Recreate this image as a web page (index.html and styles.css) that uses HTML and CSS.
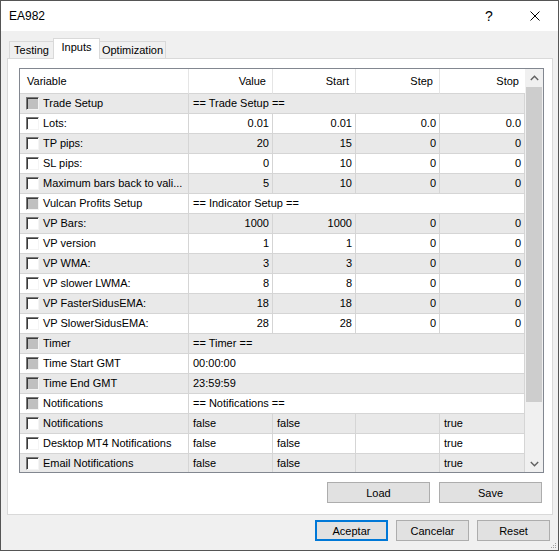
FILE: index.html
```html
<!DOCTYPE html>
<html>

<head>
  <meta charset="UTF-8">
  <title>EA982</title>
  <link rel="stylesheet" href="styles.css">
</head>

<body>
<div class="window">
  <div class="titlebar">
    <span class="title">EA982</span>
    <span class="caption-btn help">?</span>
    <span class="caption-btn close">
      <svg width="10" height="10" viewBox="0 0 10 10"><path d="M0.5 0.5 L9.5 9.5 M9.5 0.5 L0.5 9.5" stroke="#000" stroke-width="1" fill="none"/></svg>
    </span>
  </div>

  <div class="tabs">
    <div class="tab tab-testing">Testing</div>
    <div class="tab tab-inputs active">Inputs</div>
    <div class="tab tab-opt">Optimization</div>
  </div>

  <div class="panel">
    <div class="inputs">
      <div class="table">
        <div class="row head">
          <div class="cell">Variable</div>
          <div class="cell num">Value</div>
          <div class="cell num">Start</div>
          <div class="cell num">Step</div>
          <div class="cell num">Stop</div>
        </div>

        <div class="row">
          <div class="cell name"><i class="cb off"></i>Trade Setup</div>
          <div class="cell span">== Trade Setup ==</div>
        </div>
        <div class="row">
          <div class="cell name"><i class="cb"></i>Lots:</div>
          <div class="cell num">0.01</div><div class="cell num">0.01</div><div class="cell num">0.0</div><div class="cell num">0.0</div>
        </div>
        <div class="row">
          <div class="cell name"><i class="cb"></i>TP pips:</div>
          <div class="cell num">20</div><div class="cell num">15</div><div class="cell num">0</div><div class="cell num">0</div>
        </div>
        <div class="row">
          <div class="cell name"><i class="cb"></i>SL pips:</div>
          <div class="cell num">0</div><div class="cell num">10</div><div class="cell num">0</div><div class="cell num">0</div>
        </div>
        <div class="row">
          <div class="cell name"><i class="cb"></i>Maximum bars back to vali...</div>
          <div class="cell num">5</div><div class="cell num">10</div><div class="cell num">0</div><div class="cell num">0</div>
        </div>
        <div class="row">
          <div class="cell name"><i class="cb off"></i>Vulcan Profits Setup</div>
          <div class="cell span">== Indicator Setup ==</div>
        </div>
        <div class="row">
          <div class="cell name"><i class="cb"></i>VP Bars:</div>
          <div class="cell num">1000</div><div class="cell num">1000</div><div class="cell num">0</div><div class="cell num">0</div>
        </div>
        <div class="row">
          <div class="cell name"><i class="cb"></i>VP version</div>
          <div class="cell num">1</div><div class="cell num">1</div><div class="cell num">0</div><div class="cell num">0</div>
        </div>
        <div class="row">
          <div class="cell name"><i class="cb"></i>VP WMA:</div>
          <div class="cell num">3</div><div class="cell num">3</div><div class="cell num">0</div><div class="cell num">0</div>
        </div>
        <div class="row">
          <div class="cell name"><i class="cb"></i>VP slower LWMA:</div>
          <div class="cell num">8</div><div class="cell num">8</div><div class="cell num">0</div><div class="cell num">0</div>
        </div>
        <div class="row">
          <div class="cell name"><i class="cb"></i>VP FasterSidusEMA:</div>
          <div class="cell num">18</div><div class="cell num">18</div><div class="cell num">0</div><div class="cell num">0</div>
        </div>
        <div class="row">
          <div class="cell name"><i class="cb"></i>VP SlowerSidusEMA:</div>
          <div class="cell num">28</div><div class="cell num">28</div><div class="cell num">0</div><div class="cell num">0</div>
        </div>
        <div class="row">
          <div class="cell name"><i class="cb off"></i>Timer</div>
          <div class="cell span">== Timer ==</div>
        </div>
        <div class="row">
          <div class="cell name"><i class="cb off"></i>Time Start GMT</div>
          <div class="cell span">00:00:00</div>
        </div>
        <div class="row">
          <div class="cell name"><i class="cb off"></i>Time End GMT</div>
          <div class="cell span">23:59:59</div>
        </div>
        <div class="row">
          <div class="cell name"><i class="cb off"></i>Notifications</div>
          <div class="cell span">== Notifications ==</div>
        </div>
        <div class="row">
          <div class="cell name"><i class="cb"></i>Notifications</div>
          <div class="cell">false</div><div class="cell">false</div><div class="cell"></div><div class="cell">true</div>
        </div>
        <div class="row">
          <div class="cell name"><i class="cb"></i>Desktop MT4 Notifications</div>
          <div class="cell">false</div><div class="cell">false</div><div class="cell"></div><div class="cell">true</div>
        </div>
        <div class="row">
          <div class="cell name"><i class="cb"></i>Email Notifications</div>
          <div class="cell">false</div><div class="cell">false</div><div class="cell"></div><div class="cell">true</div>
        </div>
      </div>

      <div class="scrollbar">
        <div class="arrow">
          <svg width="9" height="6" viewBox="0 0 9 6"><path d="M0.8 5 L4.5 1.3 L8.2 5" stroke="#606060" stroke-width="1.4" fill="none"/></svg>
        </div>
        <div class="thumb"></div>
        <div class="track"></div>
        <div class="arrow">
          <svg width="9" height="6" viewBox="0 0 9 6"><path d="M0.8 1 L4.5 4.7 L8.2 1" stroke="#606060" stroke-width="1.4" fill="none"/></svg>
        </div>
      </div>
    </div>

    <div class="panel-buttons">
      <button class="btn wide">Load</button>
      <button class="btn wide">Save</button>
    </div>
  </div>

  <div class="dialog-buttons">
    <button class="btn default">Aceptar</button>
    <button class="btn">Cancelar</button>
    <button class="btn">Reset</button>
  </div>

  <svg class="grip" width="6" height="6" viewBox="0 0 6 6">
    <rect x="4" y="0" width="1" height="1" fill="#a0a0a0"/>
    <rect x="2" y="2" width="1" height="1" fill="#a0a0a0"/>
    <rect x="4" y="2" width="1" height="1" fill="#a0a0a0"/>
    <rect x="0" y="4" width="1" height="1" fill="#a0a0a0"/>
    <rect x="2" y="4" width="1" height="1" fill="#a0a0a0"/>
    <rect x="4" y="4" width="1" height="1" fill="#a0a0a0"/>
  </svg>
</div>
</body>

</html>
```

FILE: styles.css
```css
body {
  margin: 0;
  font-family: "Liberation Sans", Arial, sans-serif;
  font-size: 11px;
  color: #000;
}

.window {
  width: 559px;
  height: 551px;
  box-sizing: border-box;
  border: 1px solid #555;
  background: #f0f0f0;
  display: flex;
  flex-direction: column;
  position: relative;
}

/* title bar */
.titlebar {
  height: 30px;
  flex: none;
  background: #fff;
  display: flex;
  align-items: center;
  padding-left: 8px;
}
.title {
  flex: 1;
  font-size: 12px;
}
.caption-btn {
  width: 46px;
  height: 30px;
  display: flex;
  align-items: center;
  justify-content: center;
}
.help {
  font-size: 14px;
}

/* tabs */
.tabs {
  height: 27px;
  flex: none;
  display: flex;
  align-items: flex-end;
  padding-left: 8px;
}
.tab {
  height: 17px;
  box-sizing: border-box;
  border: 1px solid #d9d9d9;
  border-bottom: none;
  background: #f0f0f0;
  text-align: center;
  line-height: 16px;
}
.tab-testing {
  width: 45px;
}
.tab-inputs {
  width: 47px;
  margin-left: -1px;
}
.tab-opt {
  width: 67px;
  margin-left: -1px;
}
.tab.active {
  height: 21px;
  margin-bottom: -1px;
  background: #fff;
  line-height: 17px;
  position: relative;
  z-index: 1;
}

/* tab page */
.panel {
  height: 457px;
  flex: none;
  box-sizing: border-box;
  margin: 0 5px 0 6px;
  border: 1px solid #d9d9d9;
  background: #fff;
  padding: 9px 0 0 11px;
}

.inputs {
  width: 525px;
  height: 405px;
  box-sizing: border-box;
  border: 1px solid #828790;
  display: flex;
}
.table {
  width: 505px;
  overflow: hidden;
}
.row {
  display: grid;
  grid-template-columns: 169px 84px 83px 84px 85px;
  height: 20px;
}
.row:nth-child(even) {
  background: #e9e9e9;
}
.cell {
  box-sizing: border-box;
  border-right: 1px solid #d5d5d5;
  border-bottom: 1px solid #d5d5d5;
  padding: 0 4px;
  line-height: 19px;
  white-space: nowrap;
  overflow: hidden;
}
.cell.num {
  text-align: right;
  padding-right: 3px;
}
.cell.span {
  grid-column: span 4;
}
.cell.name {
  display: flex;
  align-items: center;
  padding-left: 6px;
}

.row.head {
  height: 25px;
  background: #fff;
}
.head .cell {
  line-height: 24px;
  border-right-color: #e5e5e5;
  padding: 0 6px 0 7px;
}
.head .cell:last-child {
  border-right: none;
}

.cb {
  width: 13px;
  height: 13px;
  flex: none;
  box-sizing: border-box;
  margin-right: 4px;
  border: 1px solid;
  border-color: #7a7a7a #f4f4f4 #f4f4f4 #7a7a7a;
  box-shadow: inset 1px 1px 0 #3a3a3a;
  background: #fff;
}
.cb.off {
  background: #c0c0c0;
}

/* scroll bar */
.scrollbar {
  width: 18px;
  background: #f0f0f0;
  display: flex;
  flex-direction: column;
}
.arrow {
  height: 17px;
  flex: none;
  display: flex;
  align-items: center;
  justify-content: center;
}
.thumb {
  height: 315px;
  flex: none;
  margin: 1px 1px 0 1px;
  background: #cdcdcd;
}
.track {
  flex: 1;
}

/* buttons */
.btn {
  width: 73px;
  height: 21px;
  box-sizing: border-box;
  border: 1px solid #adadad;
  background: #e1e1e1;
  font-family: "Liberation Sans", Arial, sans-serif;
  font-size: 11px;
  color: #000;
  padding: 0;
}
.btn.wide {
  width: 103px;
}
.btn.default {
  border: 2px solid #0078d7;
}

.panel-buttons {
  width: 525px;
  box-sizing: border-box;
  display: flex;
  justify-content: flex-end;
  gap: 9px;
  margin-top: 9px;
  padding-right: 2px;
}

.dialog-buttons {
  display: flex;
  justify-content: flex-end;
  gap: 8px;
  margin-top: 5px;
  padding-right: 8px;
}

.grip {
  position: absolute;
  right: 1px;
  bottom: 1px;
}
```
